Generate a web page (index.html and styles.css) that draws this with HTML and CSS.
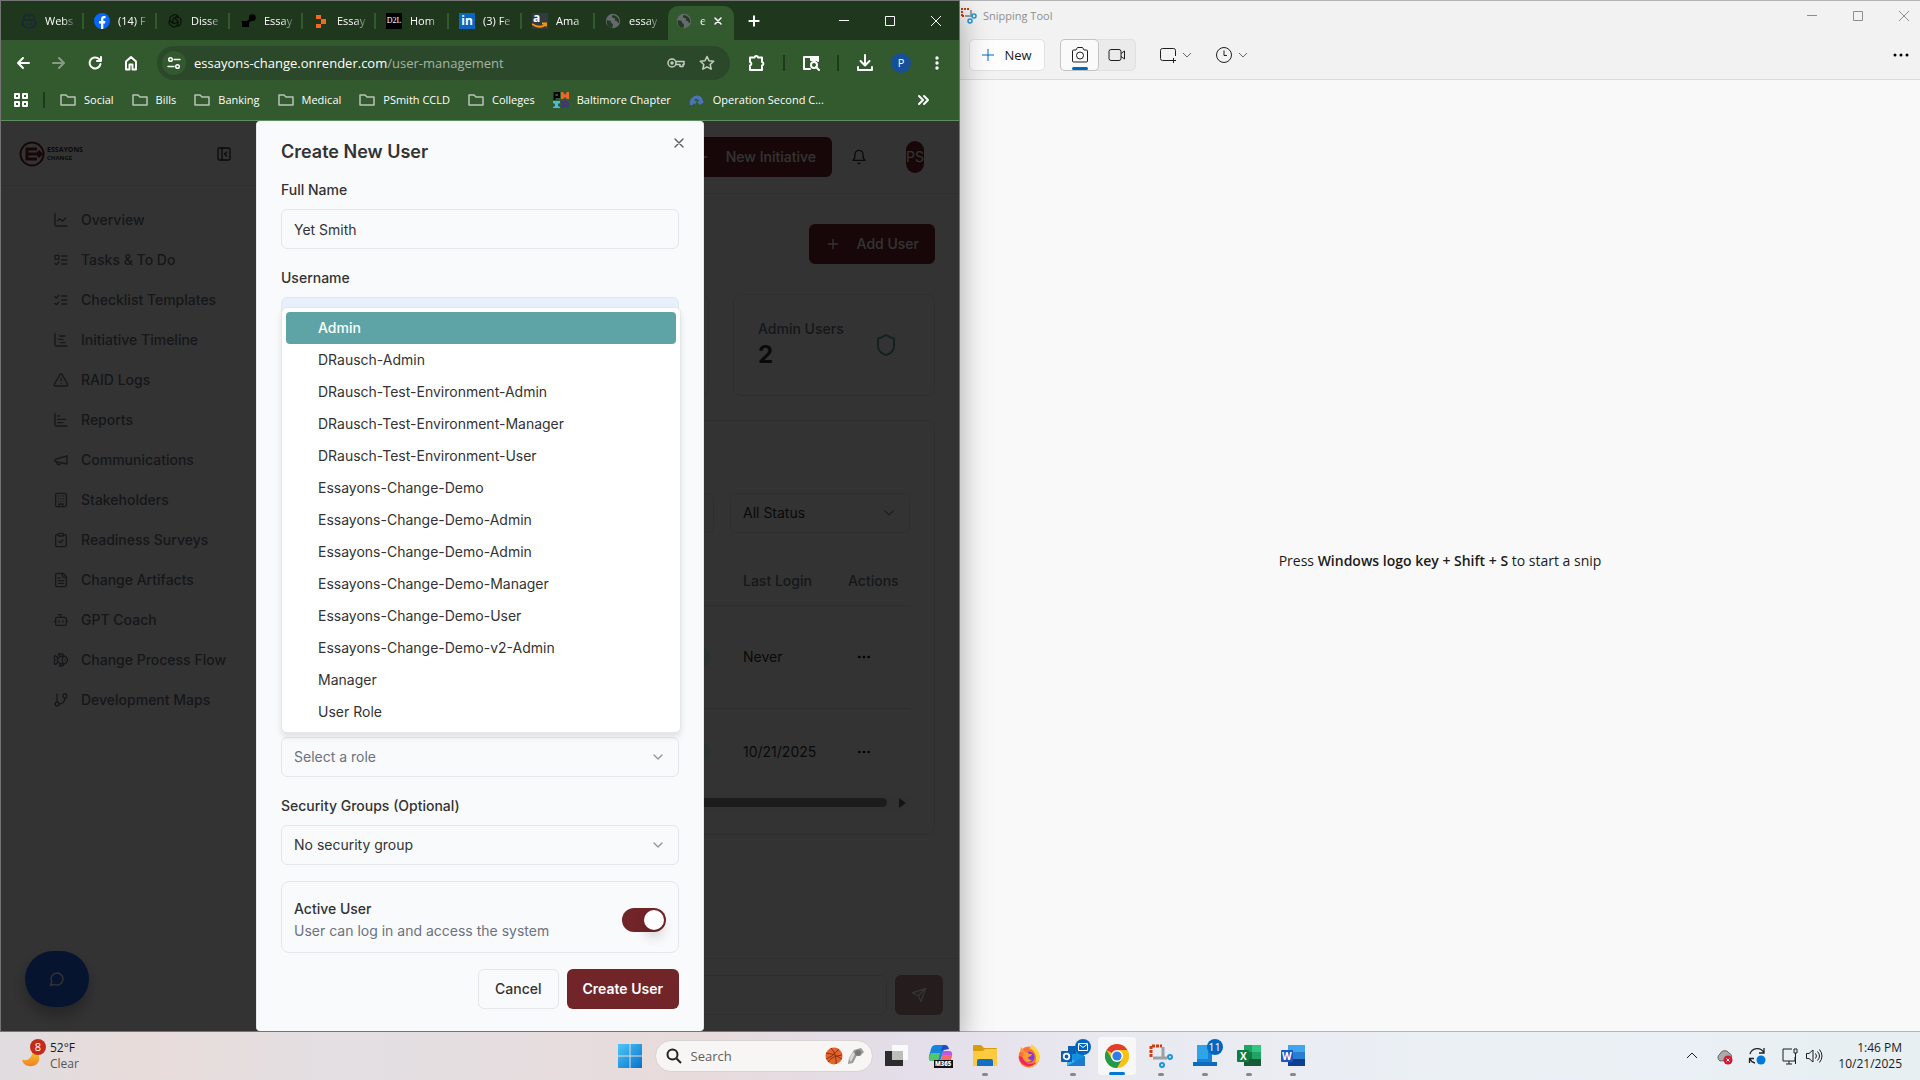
FILE: index.html
```html
<!DOCTYPE html>
<html lang="en">
<head>
<meta charset="utf-8">
<title>User Management</title>
<link rel="stylesheet" href="styles.css">
</head>
<body>
<svg class="sprite" aria-hidden="true">
  <symbol id="chart-line" viewBox="0 0 24 24"><path d="M3 3v16a2 2 0 0 0 2 2h16M19 9l-5 5-4-4-3 3"/></symbol>
  <symbol id="list-todo" viewBox="0 0 24 24"><rect x="3" y="5" width="6" height="6" rx="1"/><path d="m3 17 2 2 4-4M13 6h8M13 12h8M13 18h8"/></symbol>
  <symbol id="list-checks" viewBox="0 0 24 24"><path d="m3 17 2 2 4-4M3 7l2 2 4-4M13 6h8M13 12h8M13 18h8"/></symbol>
  <symbol id="gantt" viewBox="0 0 24 24"><path d="M3 3v16a2 2 0 0 0 2 2h16M10 6h8M12 16h6M8 11h7"/></symbol>
  <symbol id="alert" viewBox="0 0 24 24"><path d="m21.73 18-8-14a2 2 0 0 0-3.48 0l-8 14A2 2 0 0 0 4 21h16a2 2 0 0 0 1.73-3M12 9v4M12 17h.01"/></symbol>
  <symbol id="chart-bar" viewBox="0 0 24 24"><path d="M3 3v16a2 2 0 0 0 2 2h16M7 16h8M7 11h12M7 6h3"/></symbol>
  <symbol id="megaphone" viewBox="0 0 24 24"><path d="m3 11 18-5v12L3 14v-3zM11.6 16.8a3 3 0 1 1-5.8-1.6"/></symbol>
  <symbol id="building" viewBox="0 0 24 24"><rect x="4" y="2" width="16" height="20" rx="2"/><path d="M9 22v-4h6v4M8 6h.01M16 6h.01M12 6h.01M12 10h.01M12 14h.01M16 10h.01M16 14h.01M8 10h.01M8 14h.01"/></symbol>
  <symbol id="clipboard" viewBox="0 0 24 24"><rect x="8" y="2" width="8" height="4" rx="1"/><path d="M16 4h2a2 2 0 0 1 2 2v14a2 2 0 0 1-2 2H6a2 2 0 0 1-2-2V6a2 2 0 0 1 2-2h2M9 14l2 2 4-4"/></symbol>
  <symbol id="file-text" viewBox="0 0 24 24"><path d="M15 2H6a2 2 0 0 0-2 2v16a2 2 0 0 0 2 2h12a2 2 0 0 0 2-2V7ZM14 2v4a2 2 0 0 0 2 2h4M10 9H8M16 13H8M16 17H8"/></symbol>
  <symbol id="bot" viewBox="0 0 24 24"><path d="M12 8V4H8M2 14h2M20 14h2M15 13v2M9 13v2"/><rect x="4" y="8" width="16" height="12" rx="2"/></symbol>
  <symbol id="fish" viewBox="0 0 24 24"><path d="M6.5 12c.94-3.46 4.94-6 8.5-6 3.56 0 6.06 2.54 7 6-.94 3.47-3.44 6-7 6s-7.56-2.53-8.5-6ZM18 12v.5M16 17.93a9.77 9.77 0 0 1 0-11.86M7 10.67C7 8 5.58 5.97 2.73 5.5c-1 1.5-1 5 .23 6.5-1.24 1.5-1.24 5-.23 6.5C5.58 18.03 7 16 7 13.33M10.46 7.26C10.2 5.88 9.17 4.24 8 3h5.8a2 2 0 0 1 1.98 1.67l.23 1.4M16.01 17.93l-.23 1.4A2 2 0 0 1 13.8 21H9.5a5.96 5.96 0 0 0 1.49-3.98"/></symbol>
  <symbol id="branch" viewBox="0 0 24 24"><path d="M6 3v12M18 9a9 9 0 0 1-9 9"/><circle cx="18" cy="6" r="3"/><circle cx="6" cy="18" r="3"/></symbol>
  <symbol id="panel" viewBox="0 0 24 24"><rect x="3" y="3" width="18" height="18" rx="2"/><path d="M9 3v18M16 15l-3-3 3-3"/></symbol>
  <symbol id="bell" viewBox="0 0 24 24"><path d="M6 8a6 6 0 0 1 12 0c0 7 3 9 3 9H3s3-2 3-9M10.3 21a1.94 1.94 0 0 0 3.4 0"/></symbol>
  <symbol id="plus" viewBox="0 0 24 24"><path d="M5 12h14M12 5v14"/></symbol>
  <symbol id="close" viewBox="0 0 24 24"><path d="M18 6 6 18M6 6l12 12"/></symbol>
  <symbol id="down" viewBox="0 0 24 24"><path d="m6 9 6 6 6-6"/></symbol>
  <symbol id="shield" viewBox="0 0 24 24"><path d="M20 13c0 5-3.5 7.5-7.66 8.95a1 1 0 0 1-.67-.01C7.5 20.5 4 18 4 13V6a1 1 0 0 1 1-1c2 0 4.5-1.2 6.24-2.72a1.17 1.17 0 0 1 1.52 0C14.51 3.81 17 5 19 5a1 1 0 0 1 1 1z"/></symbol>
  <symbol id="send" viewBox="0 0 24 24"><path d="m22 2-7 20-4-9-9-4ZM22 2 11 13"/></symbol>
  <symbol id="message" viewBox="0 0 24 24"><path d="M7.9 20A9 9 0 1 0 4 16.1L2 22Z"/></symbol>
  <symbol id="ellipsis" viewBox="0 0 24 24"><circle cx="12" cy="12" r="1"/><circle cx="19" cy="12" r="1"/><circle cx="5" cy="12" r="1"/></symbol>
  <symbol id="folder" viewBox="0 0 16 16"><path d="M1 3h5l2 2h7v8H1z"/></symbol>
  <symbol id="globe" viewBox="0 0 16 16"><circle cx="8" cy="8" r="7.2" fill="#666a6c" stroke="none"/><path d="M2 7c2 1 4 0 4 2s2 1 2 3-1 2-1 3C3 14 1 11 2 7zM8 2c-2 1-1 3 1 3s0 3 2 3 1 2 3 2c1-3-1-7-6-8z" fill="#233b22" stroke="none"/></symbol>
</svg>

<div class="desktop">
  <section class="chrome" aria-label="Browser">
    <div class="tabstrip">
      <div class="tab"><svg class="fav" viewBox="0 0 16 16"><path d="M3 7V4q0-2 2.500-2T8 4q0-2 2.500-2T13 4v3M3 7h10M1 8v3q3 4 7 4t7-4V8M2 7v6M14 7v6M6 10v2M10 10v2" fill="none" stroke="#1b2836" stroke-width="1.600"/></svg><span class="tab-text">Webs</span></div>
      <div class="tab"><svg class="fav" viewBox="0 0 16 16"><circle cx="8" cy="8" r="8" fill="#0866ff"/><path d="M7 16v-5.500H5V8h2V6.500C7 4 8.200 3 10 3h1.500v2.200h-1C9.600 5.200 9.300 5.700 9.300 6.500V8h2.100l-.4 2.500H9.300V16z" fill="#fff"/></svg><span class="tab-text">(14) F</span></div>
      <div class="tab"><svg class="fav" viewBox="0 0 16 16"><g fill="none" stroke="#0b120b" stroke-width="1.200"><path id="petal" d="M6 2.500a3 3 0 0 1 5 1l-5 3v4L3 8.500V5q0-2 3-2.500z"/><use href="#petal" transform="rotate(120 8 8)"/><use href="#petal" transform="rotate(240 8 8)"/></g></svg><span class="tab-text">Disse</span></div>
      <div class="tab"><svg class="fav" viewBox="0 0 16 16"><path d="M1 8h5c2 0 3-1 3-3a3.400 3.400 0 1 1 4 3c-3 0-4 1-4 3v3H2V9z" fill="#000"/></svg><span class="tab-text">Essay</span></div>
      <div class="tab"><svg class="fav" viewBox="0 0 16 16"><path d="M3 2h5v4H3zM8 6h5v5H8zM3 11h5v4H3z" fill="#f26a20"/></svg><span class="tab-text">Essay</span></div>
      <div class="tab"><span class="fav d2l">D2L</span><span class="tab-text">Hom</span></div>
      <div class="tab"><span class="fav linkedin">in</span><span class="tab-text">(3) Fe</span></div>
      <div class="tab"><svg class="fav" viewBox="0 0 16 16"><rect width="16" height="16" fill="#333a40"/><text x="1" y="9" class="fav-a">a</text><path d="M0 11q7 5 13 1M10 10.500h4v3" fill="none" stroke="#ff9900" stroke-width="1.800"/></svg><span class="tab-text">Ama</span></div>
      <div class="tab last"><svg class="fav"><use href="#globe"/></svg><span class="tab-text">essay</span></div>
      <div class="tab active"><svg class="fav"><use href="#globe"/></svg><span class="tab-text">e</span><button class="bare" aria-label="Close tab"><svg class="ico i12 bold"><use href="#close"/></svg></button></div>
      <button class="bare new-tab" aria-label="New tab"><svg class="ico i16 bold"><use href="#plus"/></svg></button>
      <div class="win-controls light">
        <button class="bare" aria-label="Minimize"><svg class="thin" viewBox="0 0 12 12"><path d="M1 5.500h10"/></svg></button>
        <button class="bare" aria-label="Maximize"><svg class="thin" viewBox="0 0 12 12"><path d="M1.500 1.500h9v9h-9z"/></svg></button>
        <button class="bare" aria-label="Close"><svg class="thin" viewBox="0 0 12 12"><path d="m1 1 10 10M11 1 1 11"/></svg></button>
      </div>
    </div>

    <div class="toolbar">
      <button class="bare tool" aria-label="Back"><svg class="ico i16" viewBox="0 0 16 16"><path d="M14 8H3M8 3 3 8l5 5"/></svg></button>
      <button class="bare tool faded" aria-label="Forward"><svg class="ico i16" viewBox="0 0 16 16"><path d="M2 8h11M8 3l5 5-5 5"/></svg></button>
      <button class="bare tool" aria-label="Reload"><svg class="ico i16" viewBox="0 0 16 16"><path d="M13.500 9a5.500 5.500 0 1 1-1.500-5l2 2M14 2v4h-4"/></svg></button>
      <button class="bare tool" aria-label="Home"><svg class="ico i16" viewBox="0 0 16 16"><path d="M3 14.500V6.500L8 2l5 4.500v8h-3.500v-5h-3v5z"/></svg></button>
      <div class="omnibox">
        <span class="site"><svg class="ico i14" viewBox="0 0 14 14"><circle cx="3.500" cy="3.500" r="1.800"/><path d="M7 3.500h6M1 10.500h6"/><circle cx="10.500" cy="10.500" r="1.800"/></svg></span>
        <span class="url">essayons-change.onrender.com<span>/user-management</span></span>
        <svg class="ico i18" viewBox="0 0 18 18"><circle cx="5" cy="9" r="4"/><circle cx="5" cy="9" r="1"/><path d="M9 7.500h8v3h-1v2h-3v-2H9"/></svg>
        <svg class="ico i16" viewBox="0 0 16 16"><path d="m8 1.500 2 4.300 4.700.5-3.500 3.200 1 4.700L8 11.800l-4.200 2.400 1-4.700L1.300 6.300 6 5.800z"/></svg>
      </div>
      <div class="actions">
        <button class="bare tool" aria-label="Extensions"><svg class="ico i18" viewBox="0 0 18 18"><path d="M2 3.500h4.500a1.800 1.800 0 0 1 3.500 0h4V8a1.800 1.800 0 0 1 0 3.500V16H2v-4.500a1.800 1.800 0 0 0 0-3.500z"/></svg></button>
        <i class="bar"></i>
        <button class="bare tool" aria-label="Search with Lens"><svg class="ico i18" viewBox="0 0 18 18"><path d="M8 15H2V3h14v4"/><path d="M9 3h7v3H9z" fill="currentColor"/><circle cx="12" cy="11" r="3"/><path d="m14 13 3 3"/></svg></button>
        <i class="bar"></i>
        <button class="bare tool" aria-label="Downloads"><svg class="ico i18" viewBox="0 0 18 18"><path d="M9 1v10M4.500 7 9 11.500 13.500 7M2 13v3h14v-3"/></svg></button>
        <button class="bare profile" aria-label="Profile">P</button>
        <button class="bare tool" aria-label="Menu"><svg class="ico i16 dots" viewBox="0 0 16 16"><circle cx="8" cy="3" r="1.700"/><circle cx="8" cy="8" r="1.700"/><circle cx="8" cy="13" r="1.700"/></svg></button>
      </div>
    </div>

    <nav class="bookmarks" aria-label="Bookmarks">
      <svg class="ico i14" viewBox="0 0 14 14"><path d="M1 1h4v4H1zM9 1h4v4H9zM1 9h4v4H1zM9 9h4v4H9z"/></svg>
      <i class="bar"></i>
      <a href="#"><svg class="folder"><use href="#folder"/></svg>Social</a>
      <a href="#"><svg class="folder"><use href="#folder"/></svg>Bills</a>
      <a href="#"><svg class="folder"><use href="#folder"/></svg>Banking</a>
      <a href="#"><svg class="folder"><use href="#folder"/></svg>Medical</a>
      <a href="#"><svg class="folder"><use href="#folder"/></svg>PSmith CCLD</a>
      <a href="#"><svg class="folder"><use href="#folder"/></svg>Colleges</a>
      <a href="#"><svg class="fav" viewBox="0 0 16 16"><path d="M1.500 8V1H6v4H2" fill="none" stroke="#000" stroke-width="2"/><path d="M8 0h2l2 3 2-3h2v7h-2l-2-2-2 2H8z" fill="#f26522"/><path d="M0 9h7v2L5 12v2l2 1v1H0v-1l2-1v-2L0 11z" fill="#3fc0e0"/><path d="m8 9 7 7M11 8l5 5M8 13l3 3" stroke="#4a2a99" stroke-width="2"/></svg>Baltimore Chapter</a>
      <a href="#"><svg class="fav" viewBox="0 0 16 16"><path d="M1 13C-1 4 12-1 14 9l1 1-4 3-3-3 2-.5C9 5 3 6 4 13z" fill="#4a74b8"/><path d="m5 7 1 2h2l-1.500 1.500.5 2L5 11.500 3 12.500l.5-2L2 9h2z" fill="#4a74b8"/></svg>Operation Second C...</a>
      <button class="bare more" aria-label="More bookmarks"><svg class="ico i14" viewBox="0 0 14 14"><path d="m3 3 4 4-4 4M8 3l4 4-4 4"/></svg></button>
    </nav>

    <div class="page">
      <aside class="sidebar">
        <div class="brand">
          <svg class="brand-mark" viewBox="0 0 26 26"><circle cx="13" cy="13" r="11.500" fill="none" stroke="#722529" stroke-width="2"/><path d="M18 8H8v10h10M8 13h14M19 10l3 3-3 3" fill="none" stroke="#722529" stroke-width="3"/></svg>
          <span class="brand-name">ESSAYONS<small>CHANGE</small></span>
          <button class="bare" aria-label="Collapse sidebar"><svg class="ico i16"><use href="#panel"/></svg></button>
        </div>
        <nav class="menu">
          <a href="#"><svg class="ico i16"><use href="#chart-line"/></svg>Overview</a>
          <a href="#"><svg class="ico i16"><use href="#list-todo"/></svg>Tasks &amp; To Do</a>
          <a href="#"><svg class="ico i16"><use href="#list-checks"/></svg>Checklist Templates</a>
          <a href="#"><svg class="ico i16"><use href="#gantt"/></svg>Initiative Timeline</a>
          <a href="#"><svg class="ico i16"><use href="#alert"/></svg>RAID Logs</a>
          <a href="#"><svg class="ico i16"><use href="#chart-bar"/></svg>Reports</a>
          <a href="#"><svg class="ico i16"><use href="#megaphone"/></svg>Communications</a>
          <a href="#"><svg class="ico i16"><use href="#building"/></svg>Stakeholders</a>
          <a href="#"><svg class="ico i16"><use href="#clipboard"/></svg>Readiness Surveys</a>
          <a href="#"><svg class="ico i16"><use href="#file-text"/></svg>Change Artifacts</a>
          <a href="#"><svg class="ico i16"><use href="#bot"/></svg>GPT Coach</a>
          <a href="#"><svg class="ico i16"><use href="#fish"/></svg>Change Process Flow</a>
          <a href="#"><svg class="ico i16"><use href="#branch"/></svg>Development Maps</a>
        </nav>
        <button class="bare chat-fab" aria-label="Open chat"><svg class="ico i16"><use href="#message"/></svg></button>
      </aside>

      <main class="main">
        <header class="topbar">
          <button class="btn primary"><svg class="ico i16"><use href="#plus"/></svg>New Initiative</button>
          <button class="bare bell" aria-label="Notifications"><svg class="ico i16"><use href="#bell"/></svg></button>
          <span class="avatar">PS</span>
        </header>
        <div class="content">
          <div class="content-head"><button class="btn primary"><svg class="ico i16"><use href="#plus"/></svg>Add User</button></div>
          <div class="stats">
            <div class="card"></div>
            <div class="card"></div>
            <div class="card stat"><div><p>Admin Users</p><strong>2</strong></div><svg class="ico i24 teal"><use href="#shield"/></svg></div>
          </div>
          <div class="card users">
            <div class="filters">
              <div class="box"></div>
              <div class="select-wrap"><select class="box" aria-label="Status"><option>All Status</option></select><svg class="ico i16"><use href="#down"/></svg></div>
            </div>
            <table>
              <thead><tr><th class="fill"></th><th class="login">Last Login</th><th class="acts">Actions</th></tr></thead>
              <tbody>
                <tr class="tall"><td><span class="pill"></span></td><td>Never</td><td><button class="bare" aria-label="User actions"><svg class="ico i16"><use href="#ellipsis"/></svg></button></td></tr>
                <tr><td><span class="pill"></span></td><td>10/21/2025</td><td><button class="bare" aria-label="User actions"><svg class="ico i16"><use href="#ellipsis"/></svg></button></td></tr>
              </tbody>
            </table>
            <div class="scroll"><i></i><svg viewBox="0 0 8 10"><path d="M1 0 8 5 1 10z"/></svg></div>
          </div>
        </div>
        <footer class="composer"><input class="box" aria-label="Message"><button class="btn primary send" aria-label="Send"><svg class="ico i16"><use href="#send"/></svg></button></footer>
      </main>

      <div class="overlay"></div>
      <form class="modal" aria-labelledby="modal-title">
        <button type="button" class="bare modal-close" aria-label="Close"><svg class="ico i16"><use href="#close"/></svg></button>
        <h2 id="modal-title">Create New User</h2>
        <div class="field"><label for="name">Full Name</label><input class="box" id="name" value="Yet Smith"></div>
        <div class="field"><label for="username">Username</label><input class="box autofill" id="username"></div>
        <div class="lower">
          <div class="role">
            <div class="select-wrap"><select class="box muted" aria-label="Role"><option>Select a role</option></select><svg class="ico i16"><use href="#down"/></svg></div>
            <ul class="dropdown" role="listbox" aria-label="Roles">
              <li role="option" aria-selected="true">Admin</li>
              <li role="option">DRausch-Admin</li>
              <li role="option">DRausch-Test-Environment-Admin</li>
              <li role="option">DRausch-Test-Environment-Manager</li>
              <li role="option">DRausch-Test-Environment-User</li>
              <li role="option">Essayons-Change-Demo</li>
              <li role="option">Essayons-Change-Demo-Admin</li>
              <li role="option">Essayons-Change-Demo-Admin</li>
              <li role="option">Essayons-Change-Demo-Manager</li>
              <li role="option">Essayons-Change-Demo-User</li>
              <li role="option">Essayons-Change-Demo-v2-Admin</li>
              <li role="option">Manager</li>
              <li role="option">User Role</li>
            </ul>
          </div>
          <div class="field"><label for="group">Security Groups (Optional)</label><div class="select-wrap"><select class="box" id="group"><option>No security group</option></select><svg class="ico i16"><use href="#down"/></svg></div></div>
          <div class="active-user">
            <div><label for="active">Active User</label><p>User can log in and access the system</p></div>
            <input type="checkbox" class="switch" id="active" checked>
          </div>
          <div class="buttons"><button type="button" class="btn outline">Cancel</button><button type="button" class="btn primary strong">Create User</button></div>
        </div>
      </form>
    </div>
  </section>

  <section class="snip" aria-label="Snipping Tool">
    <div class="snip-title">
      <svg class="i16" viewBox="0 0 16 16"><path d="M1 8V1h8M1 8h3" fill="none" stroke="#cf3a12" stroke-width="2" stroke-dasharray="2 1"/><path d="M10 2v6M4 8h8" stroke="#9aa0a6" stroke-width="2"/><circle cx="13" cy="8" r="2" fill="none" stroke="#1e96dc" stroke-width="1.500"/><circle cx="9" cy="13" r="2" fill="none" stroke="#1e96dc" stroke-width="1.500"/></svg>
      <span>Snipping Tool</span>
      <div class="win-controls">
        <button class="bare" aria-label="Minimize"><svg class="thin" viewBox="0 0 12 12"><path d="M1 5.500h10"/></svg></button>
        <button class="bare" aria-label="Maximize"><svg class="thin" viewBox="0 0 12 12"><path d="M1.500 1.500h9v9h-9z"/></svg></button>
        <button class="bare" aria-label="Close"><svg class="thin" viewBox="0 0 12 12"><path d="m1 1 10 10M11 1 1 11"/></svg></button>
      </div>
    </div>
    <div class="snip-tools">
      <button class="snip-new"><svg class="thin blue" viewBox="0 0 12 12"><path d="M6 0v12M0 6h12"/></svg>New</button>
      <div class="segment">
        <button class="on" aria-label="Snip"><svg class="i18 line" viewBox="0 0 18 18"><path d="M1.500 5q0-1 1-1H5l1.500-2.500h5L13 4h2.500q1 0 1 1v10q0 1-1 1h-13q-1 0-1-1z"/><circle cx="9" cy="9.500" r="3.500"/></svg></button>
        <button aria-label="Record"><svg class="i18 line" viewBox="0 0 18 18"><rect x="1" y="3.500" width="12" height="11" rx="2"/><path d="m13 7.500 3.500-2.500v8L13 10.500"/></svg></button>
      </div>
      <button class="bare shape" aria-label="Snip shape"><svg class="i18 line" viewBox="0 0 18 18"><path d="M12 14.500H3.500a2 2 0 0 1-2-2v-8a2 2 0 0 1 2-2h11a2 2 0 0 1 2 2V10M14.500 12v5M12 14.500h5"/></svg><svg class="i10 line soft" viewBox="0 0 10 10"><path d="m1 3 4 4 4-4"/></svg></button>
      <button class="bare delay" aria-label="Delay"><svg class="i18 line" viewBox="0 0 18 18"><circle cx="9" cy="9" r="7.500"/><path d="M9 4.500V9.500h3"/></svg><svg class="i10 line soft" viewBox="0 0 10 10"><path d="m1 3 4 4 4-4"/></svg></button>
      <button class="bare see-more" aria-label="See more"><svg class="i18" viewBox="0 0 18 18"><circle cx="3" cy="9" r="1.500"/><circle cx="9" cy="9" r="1.500"/><circle cx="15" cy="9" r="1.500"/></svg></button>
    </div>
    <p class="snip-body"><span>Press <b>Windows logo key + Shift + S</b> to start a snip</span></p>
  </section>
</div>

<footer class="taskbar">
  <div class="weather">
    <span class="moon"><svg viewBox="0 0 24 24"><defs><linearGradient id="mg" x2="0" y2="1"><stop offset="0" stop-color="#f8c630"/><stop offset="1" stop-color="#f08020"/></linearGradient></defs><path d="M1 13Q11 16 15 2q8 4 7 11A11 11 0 0 1 1 13z" fill="url(#mg)"/></svg><i class="badge red">8</i></span>
    <div>52°F<span>Clear</span></div>
  </div>
  <div class="apps">
    <button class="app start" aria-label="Start"><svg viewBox="0 0 24 24"><defs><linearGradient id="wg" x2="1" y2="1"><stop offset="0" stop-color="#4cc8f8"/><stop offset="1" stop-color="#0870c8"/></linearGradient></defs><path d="M0 0h11.500v11.500H0zM12.500 0H24v11.500H12.500zM0 12.500h11.500V24H0zM12.500 12.500H24V24H12.500z" fill="url(#wg)"/></svg></button>
    <label class="search"><svg class="i16 mag" viewBox="0 0 16 16"><circle cx="6.500" cy="6.500" r="5"/><path d="m10.500 10.500 4.500 4.500"/></svg><input placeholder="Search" aria-label="Search">
      <svg class="ball" viewBox="0 0 18 18"><circle cx="9" cy="9" r="8.500" fill="#e3632c"/><path d="M1 6q8 0 16 6M6 1q6 7 5 16M1 12Q8 10 14 2M3 15q4-6 14-7" fill="none" stroke="#8a3215"/></svg>
      <svg class="ball" viewBox="0 0 18 18"><path d="m8 3 7-2 3 4-4 4-3-1-4 8-5 1 1-6z" fill="#9a9a9a"/><circle cx="12" cy="6" r="3" fill="#777"/><path d="m3 12 4-7 2 2-4 8z" fill="#d8d8d8"/></svg></label>
    <button class="app" aria-label="Task view"><svg viewBox="0 0 24 24"><path d="M0 7h18v15H0z" fill="#2c2c2c"/><path d="M7 1h16v15H7z" fill="#fafafa"/><path d="M7 7h11v9H7z" fill="#bdbdbd"/></svg></button>
    <button class="app" aria-label="Microsoft 365"><svg viewBox="0 0 24 24"><path d="M7 1h6q3 0 2 4l-3 10q-1 2-4 2H3q-4 0-3-5l2-7q1-4 5-4z" fill="#1683dc"/><path d="M2 9h9l-2 8H3q-4 0-3-4z" fill="#55c56a"/><path d="M14 1h2q3 0 4 4l-5 1-3 1 1-4z" fill="#2746c8"/><path d="M14 7h6q4 0 3 5l-2 5h-9z" fill="#c455e0"/><path d="M13 11h10l-2 7h-9z" fill="#f56a6a"/><rect x="5" y="16" width="19" height="8" fill="#111"/><text x="6" y="22" class="m365">M365</text></svg></button>
    <button class="app run" aria-label="File Explorer"><svg viewBox="0 0 24 24"><path d="M0 2q0-1 1-1h7l3 3h12q1 0 1 1v6H0z" fill="#d99c0c"/><path d="M0 7h10l2-2h12v17H0z" fill="#fcca3e"/><path d="M4 22v-5q0-2 2-2h12q2 0 2 2v5z" fill="#1270c0"/></svg></button>
    <button class="app" aria-label="Firefox"><svg viewBox="0 0 24 24"><circle cx="12" cy="13" r="10.500" fill="#ff7139"/><path d="M12 4Q15 3 14 0q7 4 8.500 11A10.500 10.500 0 0 1 12 23q8-3 7-10T12 4z" fill="#ffd43a"/><path d="M3 8 4 3l4 5z" fill="#ff9a2e"/><path d="M2 12a10 10 0 0 0 18 6Q10 24 5 13z" fill="#f0245e"/><circle cx="12" cy="13" r="5.500" fill="#7a3fe0"/><path d="M6 9q4-3 6 1h3q-1 3-4 3 0 3 4 3-4 4-8 0-2-3-1-7z" fill="#ff9a2e"/></svg></button>
    <button class="app run" aria-label="Outlook"><svg viewBox="0 0 24 24"><path d="M7 2h16v19H7z" fill="#1490df"/><path d="M7 2h8v8H7z" fill="#0a63b0"/><path d="m6 12 9 6 9-6v10H6z" fill="#35b4f0"/><path d="m6 22 18-10v10z" fill="#1a7bd0"/><rect y="7" width="11" height="11" rx="1" fill="#0a5eb5"/><circle cx="5.500" cy="12.500" r="2.800" fill="none" stroke="#fff" stroke-width="1.800"/></svg><i class="badge blue"><svg viewBox="0 0 12 12"><path d="M1.500 2.500h9v7h-9zM1.500 3 6 6.500 10.500 3" fill="none" stroke="#fff"/></svg></i></button>
    <button class="app run current" aria-label="Chrome"><svg viewBox="0 0 24 24"><circle cx="12" cy="12" r="12" fill="#fbc116"/><path d="M12 12 1.600 6A12 12 0 0 1 22.400 6z" fill="#e33b2e"/><path d="M1.600 6A12 12 0 0 0 12 24l5.200-9L12 12 6.800 15z" fill="#229a49"/><path d="M12 6h10.400a12 12 0 0 1 0 12L17.200 15z" fill="#fbc116"/><circle cx="12" cy="12" r="6" fill="#fff"/><circle cx="12" cy="12" r="4.600" fill="#2f7de9"/></svg></button>
    <button class="app run" aria-label="Snipping Tool"><svg viewBox="0 0 24 24"><path d="M2 13V2h11" fill="none" stroke="#cf3a12" stroke-width="3" stroke-dasharray="3 1"/><path d="M14 3v11M4 14h14" stroke="#9aa0a6" stroke-width="3"/><circle cx="21" cy="13" r="2" fill="none" stroke="#1e96dc" stroke-width="2"/><circle cx="13" cy="21" r="2" fill="none" stroke="#1e96dc" stroke-width="2"/></svg></button>
    <button class="app run" aria-label="Phone Link"><svg viewBox="0 0 24 24"><path d="M4 1h15v20H4z" fill="#1684d8"/><path d="M0 18h24v4H0z" fill="#0f6cbd"/><path d="M4 1h11v14H4z" fill="#2fa4ea"/></svg><i class="badge blue">11</i></button>
    <button class="app run" aria-label="Excel"><svg viewBox="0 0 24 24"><path d="M7 1h17v21H7z" fill="#21a366"/><path d="M15 1h9v7h-9z" fill="#33c481"/><path d="M7 8h8v7H7z" fill="#107c41"/><path d="M7 15h17v7H7z" fill="#185c37"/><rect y="6" width="12" height="12" rx="1" fill="#107c41"/><text x="3" y="16" class="letter">X</text></svg></button>
    <button class="app run" aria-label="Word"><svg viewBox="0 0 24 24"><path d="M7 1h17v7H7z" fill="#41a5ee"/><path d="M7 8h17v7H7z" fill="#2b7cd3"/><path d="M7 15h17v7H7z" fill="#103f91"/><rect y="6" width="12" height="12" rx="1" fill="#185abd"/><text x="1" y="16" class="letter">W</text></svg></button>
  </div>
  <div class="tray">
    <svg class="i16 line" viewBox="0 0 16 16"><path d="m3 10 5-5 5 5"/></svg>
    <svg class="i18" viewBox="0 0 18 18"><path d="M5 14a4 4 0 0 1 0-7 5 5 0 0 1 9-1 4 4 0 0 1 1 7z" fill="#aaa" stroke="#666"/><circle cx="13" cy="13" r="4.500" fill="#d01830"/><path d="m11.500 11.500 3 3M14.500 11.500l-3 3" stroke="#fff"/></svg>
    <svg class="i18" viewBox="0 0 18 18"><path d="M2 7a7.500 7.500 0 0 1 14-1M16 1v5h-5M7 16a7 7 0 0 1-5-4M1.500 16v-4.500H6" fill="none" stroke="#222" stroke-width="1.300"/><circle cx="13" cy="13" r="4.500" fill="#0078d7"/></svg>
    <span class="pair"><svg class="i18 line" viewBox="0 0 18 18"><path d="M11 2H2v12h12v-4M8 14v3M5 17h6M13 2h3v4h-3zM14.500 6v11"/></svg>
    <svg class="i18 line" viewBox="0 0 18 18"><path d="M1.500 6.500H4L8 3v12l-4-3.500H1.500zM10.500 6.500q2 2.500 0 5M12.500 4.500q4 4.500 0 9M14.500 2.500q5 6.500 0 13"/></svg></span>
    <div class="clock">1:46 PM<span>10/21/2025</span></div>
  </div>
</footer>
</body>
</html>
```

FILE: styles.css
```css
* { box-sizing: border-box; }

body {
  margin: 0;
  height: 100vh;
  display: flex;
  flex-direction: column;
  overflow: hidden;
  font: 12px/16px "Open Sans", "Noto Sans", sans-serif;
  color: #1b1b1b;
}

p, h2, ul { margin: 0; padding: 0; }
a { color: inherit; text-decoration: none; }
button, input, select { font: inherit; color: inherit; }
svg { display: block; flex: none; }

.sprite { position: absolute; width: 0; height: 0; }
.bare { border: 0; background: none; padding: 0; display: grid; place-items: center; }
.ico { fill: none; stroke: currentColor; stroke-width: 2; stroke-linecap: round; stroke-linejoin: round; }
.line { fill: none; stroke: #1f1f1f; stroke-width: 1; }
.soft { stroke: #666; }
.thin { width: 12px; height: 12px; fill: none; stroke: currentColor; stroke-width: 1; }
.i10 { width: 10px; height: 10px; }
.i12 { width: 12px; height: 12px; }
.i14 { width: 14px; height: 14px; }
.i16 { width: 16px; height: 16px; }
.i18 { width: 18px; height: 18px; }
.i24 { width: 24px; height: 24px; }
.bold { stroke-width: 3; }

.desktop { flex: 1; min-height: 0; display: grid; grid-template-columns: 1fr 1fr; }

/* Browser window */
.chrome {
  display: flex;
  flex-direction: column;
  min-width: 0;
  min-height: 0;
  border: 1px solid #747474;
  background: #33592f;
  color: #fff;
  font-size: 11px;
  z-index: 1;
  box-shadow: 0 12px 28px rgba(0, 0, 0, .35);
}

.tabstrip { display: flex; height: 39px; padding-left: 10px; background: #1f371d; flex: none; }
.tab { width: 73px; display: flex; align-items: center; gap: 8px; padding-left: 10px; }
.tab:not(.last):not(.active)::after { content: ""; flex: none; margin-left: -3px; width: 2px; height: 16px; background: #33592f; }
.fav { width: 16px; height: 16px; flex: none; }
.fav-a { font: 700 12px "Open Sans", sans-serif; fill: #fff; }
.d2l { background: #000; font: 8px/16px "Liberation Serif", serif; text-align: center; }
.linkedin { background: #0a66c2; font: 700 12px/15px "Open Sans", sans-serif; text-align: center; }
.tab-text { width: 32px; flex: none; white-space: nowrap; mask-image: linear-gradient(90deg, #000 55%, transparent); }
.tab.active { width: 66px; margin-top: 5px; padding: 0 8px 4px; background: #33592f; border-radius: 10px 10px 0 0; }
.active .tab-text { width: 6px; }
.active .bare { margin-left: -2px; }
.new-tab { width: 40px; }
.win-controls { margin-left: auto; display: flex; }
.light button { width: 46px; }

.toolbar { display: flex; align-items: center; height: 46px; padding-left: 4px; flex: none; }
.tool { width: 36px; height: 36px; }
.faded { opacity: .4; }
.omnibox { flex: 1; height: 34px; margin-left: 8px; padding: 0 15px 0 5px; border-radius: 17px; background: #2c482a; display: flex; align-items: center; gap: 14px; color: #c4cfc2; }
.omnibox .ico { stroke-width: 1.5; }
.site { width: 24px; height: 24px; border-radius: 12px; background: #33592f; color: #fff; display: grid; place-items: center; }
.url { flex: 1; margin-left: -6px; font-size: 13px; color: #fff; white-space: nowrap; }
.url span { color: #a5b5a2; }
.actions { display: flex; align-items: center; margin-left: 9px; margin-right: 4px; }
.bar { width: 2px; height: 16px; background: #20391e; }
.actions .bar { margin: 0 8px; }
.profile { width: 20px; height: 20px; margin: 0 8px; border-radius: 10px; background: #174f99; }
.dots { fill: #fff; stroke: none; }

.bookmarks { display: flex; align-items: center; gap: 18px; height: 35px; padding: 0 29px 6px 13px; border-bottom: 1px solid #5f8f61; flex: none; }
.bookmarks a { display: flex; align-items: center; gap: 8px; white-space: nowrap; }
.bookmarks .bar { margin: 0 -3px; }
.folder { width: 16px; height: 16px; fill: none; stroke: #b9c4b7; stroke-width: 1.5; stroke-linejoin: round; }
.more { margin-left: auto; }

/* Web application */
.page { position: relative; flex: 1; min-height: 0; display: flex; background: #fff; color: #333; font: 14px/20px Inter, sans-serif; }
.sidebar { width: 256px; flex: none; display: flex; flex-direction: column; border-right: 1px solid #e5e7eb; }
.brand { height: 65px; display: flex; align-items: center; padding: 2px 24px 0 18px; border-bottom: 1px solid #e5e7eb; }
.brand-mark { width: 26px; height: 26px; }
.brand-name { margin: 0 auto 0 2px; font: 700 7px/8px "Open Sans", sans-serif; }
.brand-name small { display: block; font-size: 6px; }
.menu { padding: 14px 0 0 52px; font-weight: 500; color: #6b7280; }
.menu a { display: flex; align-items: center; gap: 12px; height: 40px; }
.chat-fab { width: 64px; height: 56px; margin: auto 0 24px 24px; border-radius: 28px; background: #2563eb; color: #fff; box-shadow: 0 8px 16px rgba(0, 0, 0, .3); }

.main { flex: 1; min-width: 0; display: flex; flex-direction: column; }
.topbar { height: 73px; display: flex; align-items: center; justify-content: flex-end; padding-right: 35px; border-bottom: 1px solid #e5e7eb; }
.bell { margin: 0 39px 0 19px; }
.avatar { width: 18px; height: 32px; border-radius: 9px; background: #722529; color: #fff; display: grid; place-items: center; }
.btn { height: 40px; padding: 0 16px; border: 0; border-radius: 6px; font-weight: 500; display: flex; align-items: center; justify-content: center; gap: 16px; white-space: nowrap; }
.primary { background: #722529; color: #fff; }
.outline { border: 1px solid #e5e7eb; background: #f9fafc; }
.strong { font-weight: 600; }
.content { flex: 1; padding: 30px 24px; }
.content-head { display: flex; justify-content: flex-end; }
.stats { display: grid; grid-template-columns: repeat(3, 1fr); gap: 24px; margin: 30px 0 24px; }
.card { border: 1px solid #e5e7eb; border-radius: 8px; }
.stat { height: 102px; padding: 0 36px 0 24px; display: flex; align-items: center; justify-content: space-between; }
.stat p { font-weight: 500; color: #6b7280; }
.stat strong { font-size: 24px; line-height: 32px; }
.teal { color: #5ea4a7; }
.users { padding: 72px 24px 24px; }
.filters { display: grid; grid-template-columns: 1fr 180px; gap: 16px; }
.box { width: 100%; height: 40px; padding: 0 12px; border: 1px solid #e5e7eb; border-radius: 6px; background: transparent; appearance: none; outline: 0; }
.select-wrap { display: grid; align-items: center; }
.select-wrap > * { grid-area: 1 / 1; }
.select-wrap svg { justify-self: end; margin-right: 13px; opacity: .5; pointer-events: none; }

table { width: 100%; margin-top: 24px; border-collapse: collapse; table-layout: fixed; }
th, td { padding: 0; text-align: left; }
th { height: 48px; font-weight: 500; color: #6b7280; }
.login { width: 105px; }
.acts { width: 62px; }
td { height: 87px; }
.tall td { height: 103px; }
thead tr, .tall { border-bottom: 1px solid #e5e7eb; }
td button { margin-left: 8px; color: #000; }
.pill { display: block; width: 60px; height: 20px; margin-left: auto; margin-right: 32px; border-radius: 10px; background: #dcfce7; }
.scroll { display: flex; align-items: center; height: 15px; background: #fafafa; }
.scroll i { flex: 1; height: 9px; border-radius: 5px; background: #8b8b8b; }
.scroll svg { width: 8px; height: 10px; margin: 0 4px 0 11px; fill: #666; }
.composer { display: flex; gap: 8px; padding: 16px 16px 16px 24px; border-top: 1px solid #e5e7eb; }
.send { width: 48px; padding: 0; opacity: .5; flex: none; }

.overlay { position: absolute; inset: 0; background: rgba(0, 0, 0, .8); }
.modal {
  position: absolute;
  inset: 0 0 0 50%;
  width: 448px;
  margin-left: -224px;
  padding: 22px 24px;
  display: flex;
  flex-direction: column;
  gap: 19px;
  border: 1px solid #e5e7eb;
  border-width: 0 1px;
  border-radius: 4px;
  background: #f9fafc;
}
.modal h2 { font-size: 18px; line-height: 18px; font-weight: 600; }
.modal-close { position: absolute; top: 14px; right: 16px; opacity: .8; }
.field { display: flex; flex-direction: column; gap: 9px; }
.modal label { font-weight: 500; }
.autofill { background: #e8f0fe; }
.muted, .active-user p { color: #6b7280; }
.lower { margin-top: auto; display: flex; flex-direction: column; }
.lower .field { margin: 19px 0 16px; }
.role { position: relative; }
.dropdown { position: absolute; left: 0; right: -2px; bottom: 44px; padding: 4px; list-style: none; border: 1px solid #e5e7eb; border-radius: 6px; background: #fff; box-shadow: 0 4px 6px rgba(0, 0, 0, .1); }
.dropdown li { padding: 6px 32px; border-radius: 4px; }
.dropdown [aria-selected="true"] { background: #5ea4a7; color: #fff; font-weight: 500; }
.active-user { display: flex; align-items: center; justify-content: space-between; height: 72px; padding: 6px 12px 0; border: 1px solid #e5e7eb; border-radius: 8px; }
.active-user p { padding-top: 2px; }
.switch { appearance: none; width: 44px; height: 24px; margin: 0; padding: 2px; border-radius: 12px; background: #722529; display: flex; justify-content: flex-end; }
.switch::before { content: ""; width: 20px; height: 20px; border-radius: 10px; background: #fff; box-shadow: 0 8px 12px rgba(0, 0, 0, .15); }
.buttons { display: flex; justify-content: flex-end; gap: 8px; margin-top: 16px; }

/* Snipping Tool window */
.snip { display: flex; flex-direction: column; background: #f9f9f9; border: solid #b4b4b4; border-width: 1px 0; }
.snip-title { display: flex; align-items: center; gap: 6px; height: 30px; padding: 0 10px 0 1px; background: #f2f2f2; color: #8e8e8e; font-size: 11px; }
.snip-title .win-controls { gap: 34px; }
.snip-tools { display: flex; align-items: center; height: 49px; padding: 0 10px 0 9px; background: #f2f2f2; border-bottom: 1px solid #dcdcdc; }
.snip-new { width: 76px; height: 32px; display: flex; align-items: center; justify-content: center; gap: 10px; padding: 0; border: 1px solid #e2e2e2; border-radius: 5px; background: #fdfdfd; font-size: 13px; }
.blue { color: #0067c0; }
.segment { display: flex; margin-left: 15px; height: 32px; border: 1px solid #e0e0e0; border-radius: 5px; background: #ebebeb; }
.segment button { width: 37px; padding: 0; border: 0; background: none; display: grid; place-items: center; }
.segment .on { position: relative; border-radius: 4px; background: #fafafa; box-shadow: 0 0 0 1px #c4c4c4; }
.on::after { content: ""; position: absolute; bottom: 0; width: 16px; height: 3px; border-radius: 2px; background: #0067c0; }
.shape, .delay { display: flex; gap: 5px; margin-left: 23px; }
.see-more { margin-left: auto; }
.snip-body { flex: 1; display: grid; place-items: center; padding-top: 11px; font-size: 14px; line-height: 20px; }
.snip-body b { font-weight: 600; }

/* Taskbar */
.taskbar { height: 48px; flex: none; display: grid; grid-template-columns: 1fr auto 1fr; align-items: center; background: linear-gradient(90deg, #e0dde0, #e8dcda 7%, #e3dfe3 18%, #e8dbdb 36%, #e3dde8 46%, #e9e9f0 58%, #ebf0f5 75%, #e8eff3); position: relative; z-index: 2; }
.weather { display: flex; gap: 7px; padding-left: 19px; }
.weather div span, .clock span { display: block; color: #555; }
.moon { position: relative; width: 24px; padding-top: 9px; }
.moon svg { width: 24px; height: 20px; }
.badge { position: absolute; display: grid; place-items: center; min-width: 16px; height: 16px; border-radius: 8px; color: #fff; font-style: normal; font-size: 11px; line-height: 14px; }
.red { top: -1px; left: 11px; background: #c42b1c; }
.blue.badge { top: 7px; right: 4px; background: #0067c0; color: #fff; }
.app .badge svg { width: 12px; height: 12px; }
.apps { display: flex; align-items: center; margin-left: 2px; }
.app { position: relative; width: 44px; height: 48px; padding: 0; border: 0; background: none; display: grid; place-items: center; }
.app > svg { width: 24px; height: 24px; overflow: visible; }
.run::after { content: ""; position: absolute; bottom: 4px; width: 6px; height: 3px; border-radius: 2px; background: #888; }
.current { width: 38px; height: 38px; margin: 0 3px; border-radius: 4px; background: #f7f7fa; }
.current::after { bottom: 0; width: 16px; background: #0078d4; }
.m365 { font: 800 6px "Open Sans", sans-serif; fill: #fff; }
.letter { font: 700 10px "Open Sans", sans-serif; fill: #fff; }
.search { width: 218px; height: 32px; margin: 0 2px 0 3px; padding: 0 8px 0 10px; display: flex; align-items: center; gap: 3px; border: 1px solid #d8d3d5; border-radius: 16px; background: #f8f5f5; }
.search input { flex: 1; min-width: 0; margin-left: 6px; border: 0; padding: 0; background: none; outline: 0; font-size: 13px; }
.search input::placeholder { color: #606060; opacity: 1; }
.mag { fill: none; stroke: #222; stroke-width: 2; }
.ball { width: 18px; height: 18px; }
.tray { justify-self: end; display: flex; align-items: center; gap: 15px; padding-right: 18px; }
.pair { display: flex; gap: 6px; }
.clock { text-align: right; }
.clock span { color: inherit; }
```
